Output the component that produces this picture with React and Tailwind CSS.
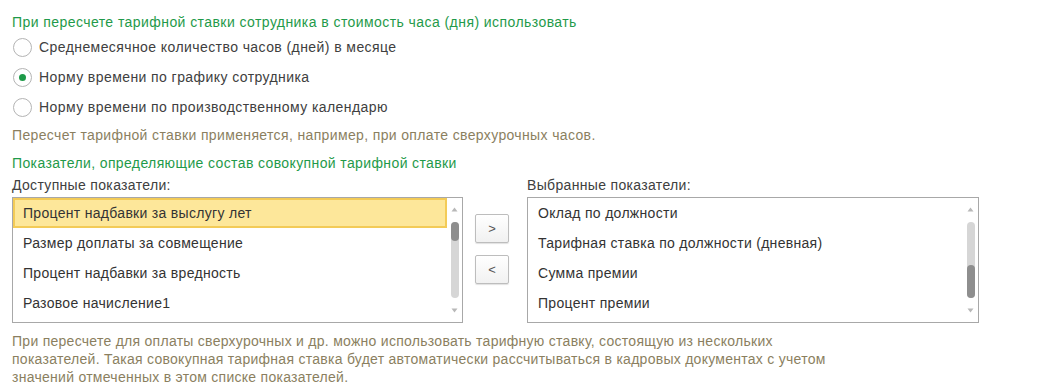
import React from "react";

const font = { fontFamily: '"Liberation Sans", Arial, sans-serif' };

function Radio({ checked, label }) {
  return (
    <div className="flex h-[30px] items-center">
      <div className="ml-[1px] flex h-[19px] w-[19px] items-center justify-center rounded-full border border-[#b4b4b4] bg-white">
        {checked && <div className="h-[7px] w-[7px] rounded-full bg-[#1d9a48]" />}
      </div>
      <span className="ml-[7px] text-[14px] leading-[18px] tracking-[0.42px] text-[#404040]">{label}</span>
    </div>
  );
}

function ScrollBar({ thumbTop, thumbHeight }) {
  return (
    <div className="relative h-full w-[15px] shrink-0">
      <svg className="absolute left-[4px] top-[9px]" width="7" height="5" viewBox="0 0 7 5">
        <path d="M3.5 0.5 L6.5 4.5 L0.5 4.5 Z" fill="#b8b8b8" />
      </svg>
      <div className="absolute left-[4px] top-[24px] h-[76px] w-[8px] rounded-[4px] bg-[#d6d6d6]" />
      <div
        className="absolute left-[4px] w-[8px] rounded-[4px] bg-[#8e8e8e]"
        style={{ top: thumbTop, height: thumbHeight }}
      />
      <svg className="absolute left-[4px] top-[110px]" width="7" height="5" viewBox="0 0 7 5">
        <path d="M0.5 0.5 L6.5 0.5 L3.5 4.5 Z" fill="#b8b8b8" />
      </svg>
    </div>
  );
}

function ListBox({ items, selected, thumbTop, thumbHeight, width }) {
  return (
    <div className={`flex h-[126px] border border-[#a8a8a8] bg-white ${width}`}>
      <div className="flex flex-1 flex-col">
        {items.map((it, i) => (
          <div
            key={i}
            className={
              i === selected
                ? "flex h-[30px] items-center border-2 border-[#f3cb57] bg-[#fde79a] pl-[8px] text-[14px] tracking-[0.3px] text-[#333]"
                : "flex h-[30px] items-center pl-[10px] text-[14px] tracking-[0.3px] text-[#333]"
            }
          >
            {it}
          </div>
        ))}
      </div>
      <ScrollBar thumbTop={thumbTop} thumbHeight={thumbHeight} />
    </div>
  );
}

function Btn({ children }) {
  return (
    <div className="flex h-[29px] w-[34px] items-center justify-center rounded-[2px] border border-[#bdbdbd] bg-gradient-to-b from-white to-[#f1f1f1] text-[13px] text-[#555] shadow-[0_1px_1px_rgba(0,0,0,0.12)]">
      {children}
    </div>
  );
}

export default function App() {
  return (
    <div style={font} className="h-[388px] w-[1041px] bg-white pl-[12px] pt-[13px]">
      <div className="text-[14px] leading-[18px] tracking-[0.43px] text-[#1f9a4a]">
        При пересчете тарифной ставки сотрудника в стоимость часа (дня) использовать
      </div>
      <div className="mt-[1px]">
        <Radio label="Среднемесячное количество часов (дней) в месяце" />
        <Radio checked label="Норму времени по графику сотрудника" />
        <Radio label="Норму времени по производственному календарю" />
      </div>
      <div className="mt-[4px] text-[14px] leading-[18px] tracking-[0.36px] text-[#8b7f5f]">
        Пересчет тарифной ставки применяется, например, при оплате сверхурочных часов.
      </div>
      <div className="mt-[10px] text-[14px] leading-[18px] tracking-[0.38px] text-[#1f9a4a]">
        Показатели, определяющие состав совокупной тарифной ставки
      </div>
      <div className="mt-[4px] flex">
        <div className="flex flex-col">
          <div className="text-[14px] leading-[18px] tracking-[0.33px] text-[#404040]">Доступные показатели:</div>
          <div className="mt-[3px]">
            <ListBox
              width="w-[451px]"
              items={[
                "Процент надбавки за выслугу лет",
                "Размер доплаты за совмещение",
                "Процент надбавки за вредность",
                "Разовое начисление1",
              ]}
              selected={0}
              thumbTop={24}
              thumbHeight={19}
            />
          </div>
        </div>
        <div className="ml-[12px] mr-[18px] mt-[38px] flex flex-col gap-[12px]">
          <Btn>&gt;</Btn>
          <Btn>&lt;</Btn>
        </div>
        <div className="flex flex-col">
          <div className="text-[14px] leading-[18px] tracking-[0.33px] text-[#404040]">Выбранные показатели:</div>
          <div className="mt-[3px]">
            <ListBox
              width="w-[452px]"
              items={[
                "Оклад по должности",
                "Тарифная ставка по должности (дневная)",
                "Сумма премии",
                "Процент премии",
              ]}
              selected={-1}
              thumbTop={67}
              thumbHeight={33}
            />
          </div>
        </div>
      </div>
      <div className="mt-[9px] text-[14px] leading-[18px] tracking-[0.27px] text-[#8b7f5f]">
        <div className="whitespace-nowrap">
          При пересчете для оплаты сверхурочных и др. можно использовать тарифную ставку, состоящую из нескольких
        </div>
        <div className="whitespace-nowrap">
          показателей. Такая совокупная тарифная ставка будет автоматически рассчитываться в кадровых документах с учетом
        </div>
        <div className="whitespace-nowrap">значений отмеченных в этом списке показателей.</div>
      </div>
    </div>
  );
}
